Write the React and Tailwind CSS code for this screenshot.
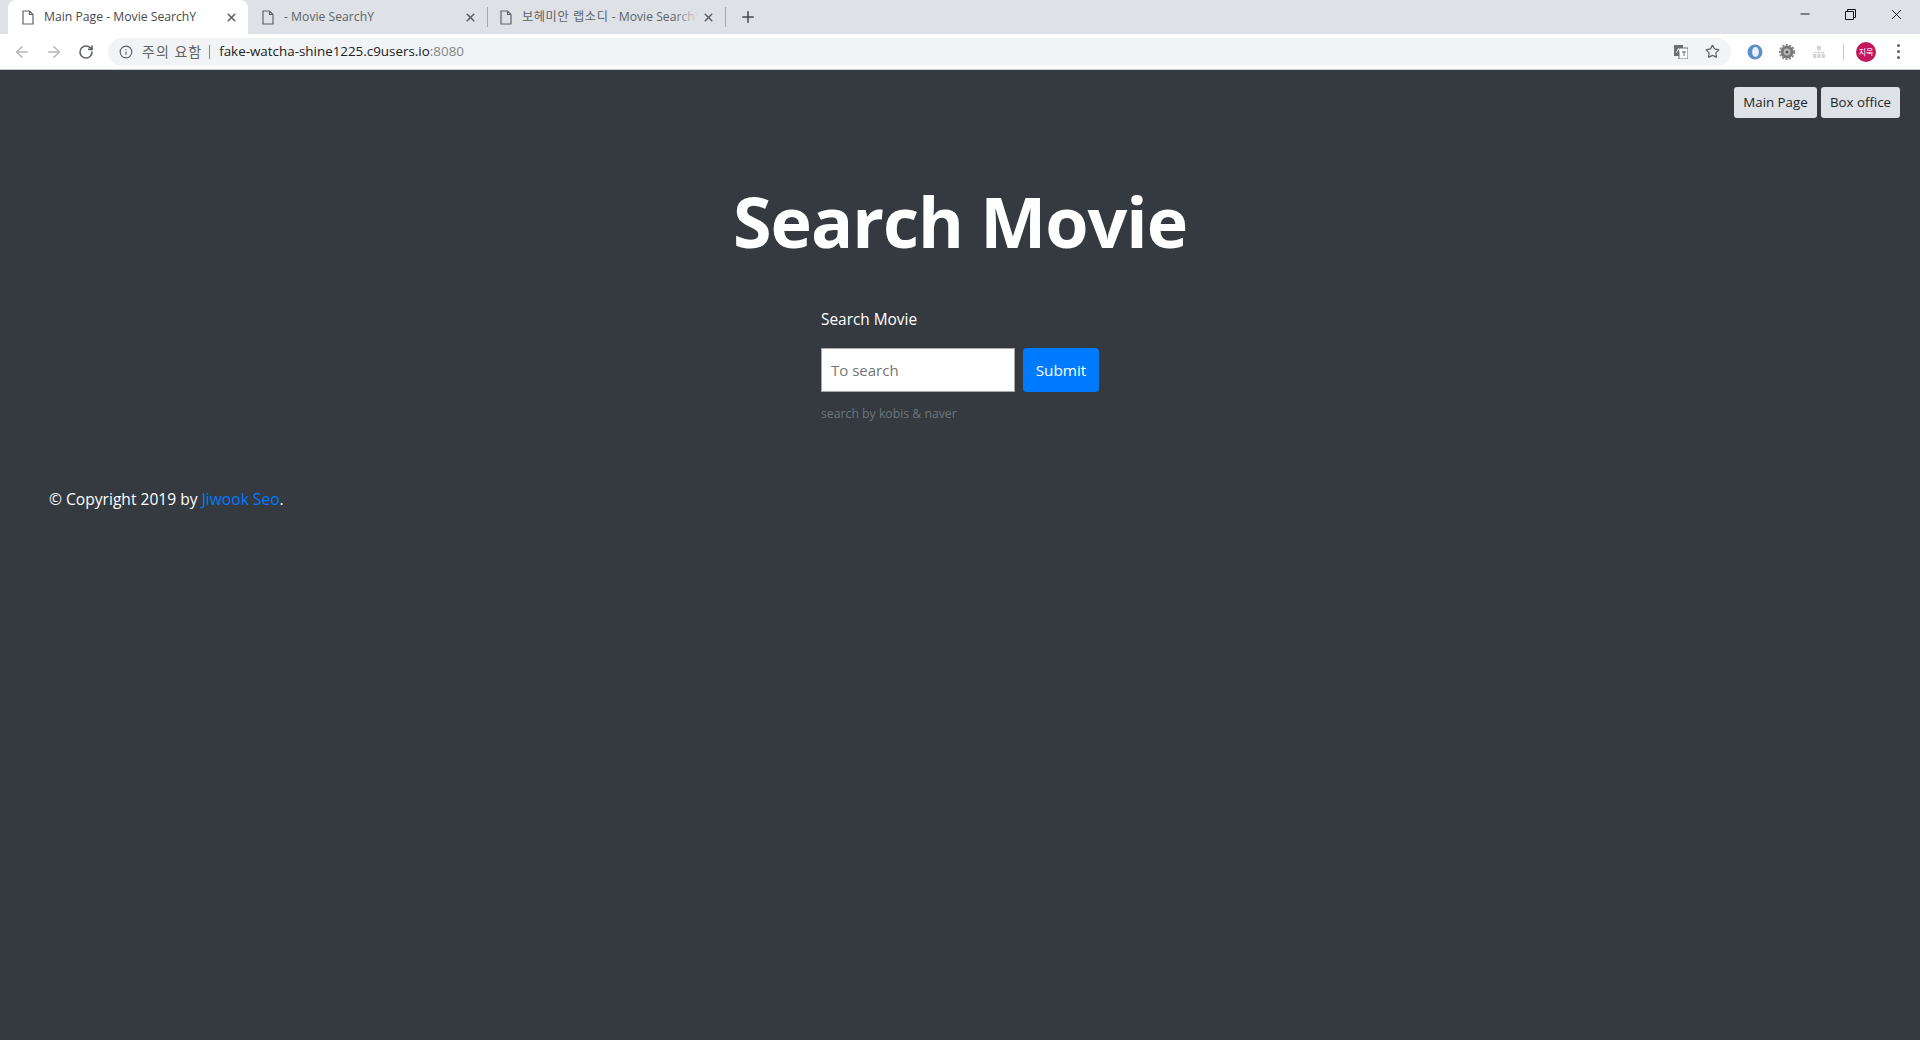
import React from "react";
import { ArrowLeft, ArrowRight, RotateCw, Info, Star, Plus, X, Minus } from "lucide-react";

const uiFont = "font-['Open_Sans','Noto_Sans_CJK_KR',sans-serif]";

const PageIcon = () => (
    <svg width="12" height="15" viewBox="0 0 12 15" fill="none" stroke="#5f6368" strokeWidth="1.2" className="shrink-0">
        <path d="M1 1h6.5L11 4.5V14H1z" />
        <path d="M7.5 1v3.5H11" />
    </svg>
);

const Tab = ({ title, active, width, inset = "pl-[14px]", fade }) => (
    <div
        className={`flex items-center h-[34px] ${inset} pr-[10px] ${width} shrink-0 ${
            active ? "bg-white rounded-t-lg" : ""
        }`}
    >
        <PageIcon />
        <span
            className={`relative ml-[10px] flex-1 overflow-hidden whitespace-nowrap text-[12.2px] ${
                active ? "text-[#45494f]" : "text-[#5f6368]"
            }`}
        >
            {title}
            {fade && (
                <span className="absolute right-0 top-0 bottom-0 w-[24px] bg-gradient-to-r from-transparent to-[#dee1e6]" />
            )}
        </span>
        <X size={13} strokeWidth={3} className="text-[#5f6368] shrink-0 ml-1" />
    </div>
);

const Divider = () => <div className="w-px h-[20px] bg-[#a5a8ad] shrink-0" />;

const TabStrip = () => (
    <div className="flex items-end h-[34px] bg-[#dee1e6] pl-[8px]">
        <Tab title="Main Page - Movie SearchY" active width="w-[240px]" />
        <div className="flex items-center h-[34px]">
            <Tab title="- Movie SearchY" width="w-[239px]" />
            <Divider />
            <Tab
                title={
                    <>
                        <span className="tracking-[0.6px]">보헤미안 랩소디</span> - Movie SearchY
                    </>
                }
                inset="pl-[12px]"
                width="w-[237px]"
                fade
            />
            <Divider />
            <Plus size={18} strokeWidth={2} className="text-[#45494f] ml-[13px]" />
        </div>
        <div className="ml-auto flex items-center h-[28px] self-start text-black">
            <Minus size={14} strokeWidth={1.5} className="mr-[33px]" />
            <svg width="11" height="11" viewBox="0 0 11 11" fill="none" stroke="#111" className="mr-[32px]">
                <path d="M.5 2.5h8v8h-8z" />
                <path d="M2.5 2.5v-2h8v8h-2" />
            </svg>
            <X size={17} strokeWidth={1.2} className="mr-[15px]" />
        </div>
    </div>
);

const ExtensionIcons = () => (
    <div className="flex items-center">
        <svg width="16" height="16" viewBox="0 0 16 16" className="ml-[16px]">
            <circle cx="8" cy="8" r="7.5" fill="#5b8fc9" />
            <ellipse cx="8.5" cy="8" rx="3.4" ry="5" fill="#e8f1fa" />
        </svg>
        <svg width="16" height="16" viewBox="0 0 16 16" className="ml-[16px]">
            <circle cx="8" cy="8" r="6.4" fill="#777" />
            <circle cx="8" cy="8" r="7.2" fill="none" stroke="#777" strokeWidth="1.6" strokeDasharray="2 1.6" />
            <circle cx="8" cy="8" r="3.4" fill="#bbb" />
            <circle cx="8" cy="8" r="1.6" fill="#555" />
        </svg>
        <svg width="14" height="14" viewBox="0 0 14 14" fill="#d4d4d4" className="ml-[17px]">
            <rect x="5" y="1" width="4" height="4" />
            <rect x="1" y="9" width="3.4" height="4" />
            <rect x="5.3" y="9" width="3.4" height="4" />
            <rect x="9.6" y="9" width="3.4" height="4" />
            <path d="M6.6 5h.8v2H12v2h-.8V8H7.4v1h-.8V8H2.8v1H2V7h4.6z" />
        </svg>
        <div className="w-px h-[16px] bg-[#c8cacd] ml-[17px]" />
        <div className="ml-[12px] w-[20px] h-[20px] rounded-full bg-[#c2185b] text-white text-[8px] flex items-center justify-center">
            지욱
        </div>
        <div className="ml-[21px] mr-[20px] flex flex-col gap-[3px]">
            <span className="w-[3px] h-[3px] rounded-full bg-[#5f6368]" />
            <span className="w-[3px] h-[3px] rounded-full bg-[#5f6368]" />
            <span className="w-[3px] h-[3px] rounded-full bg-[#5f6368]" />
        </div>
    </div>
);

const Toolbar = () => (
    <div className="flex items-center h-[36px] bg-white border-b border-[#c9ccd0]">
        <ArrowLeft size={18} strokeWidth={2} className="text-[#b4b6b9] ml-[13px]" />
        <ArrowRight size={18} strokeWidth={2} className="text-[#b4b6b9] ml-[14px]" />
        <RotateCw size={16} strokeWidth={2.4} className="text-[#5f6368] ml-[15px]" />
        <div className="flex items-center flex-1 h-[28px] ml-[14px] rounded-full bg-[#f1f3f4] pl-[11px] pr-[10px]">
            <Info size={14} strokeWidth={2} className="text-[#5f6368]" />
            <span className="ml-[9px] text-[14px] tracking-[1px] text-[#5f6368]">주의 요함</span>
            <span className="w-px h-[14px] bg-[#80868b] ml-[7px]" />
            <span className="ml-[9px] text-[13.4px] text-[#202124]">
                fake-watcha-shine1225.c9users.io<span className="text-[#80868b]">:8080</span>
            </span>
            <svg width="14" height="14" viewBox="0 0 14 14" className="ml-auto mr-[17px]">
                <rect x="0" y="0" width="9" height="11" fill="#6b6f73" />
                <rect x="5" y="3" width="9" height="11" fill="#fff" stroke="#6b6f73" />
                <path d="M2.5 7.5l2-4 2 4" fill="none" stroke="#fff" />
                <path d="M8 7h4M10 6v5" fill="none" stroke="#6b6f73" />
            </svg>
            <Star size={15} strokeWidth={2} className="text-[#5f6368] mr-[1px]" />
        </div>
        <ExtensionIcons />
    </div>
);

const NavButton = ({ children, width }) => (
    <button className={`h-[31px] ${width} rounded-[3px] bg-[#dee2e6] text-[13.3px] text-[#212529]`}>{children}</button>
);

const App = () => {
    return (
        <div className={`${uiFont} w-full h-[1040px] flex flex-col bg-[#343a40] overflow-hidden`}>
            <TabStrip />
            <Toolbar />
            <main className="flex-1 flex flex-col">
                <nav className="flex justify-end gap-[4px] pt-[17px] pr-[20px]">
                    <NavButton width="w-[83px]">Main Page</NavButton>
                    <NavButton width="w-[79px]">Box office</NavButton>
                </nav>
                <h1 className="mt-[60px] text-center text-[70px] leading-[86px] tracking-[-1px] font-bold text-white">
                    Search Movie
                </h1>
                <form className="mx-auto w-[278px] mt-[44px]">
                    <label className="block text-[15.4px] leading-[24px] text-white">Search Movie</label>
                    <div className="flex gap-[8px] mt-[16px]">
                        <input
                            placeholder="To search"
                            className="w-[194px] h-[44px] px-[9px] bg-white border border-[#a8a8a8] text-[15px] placeholder:text-[#757575]"
                        />
                        <button type="button" className="w-[76px] h-[44px] rounded-[4px] bg-[#007bff] text-[15.3px] text-white">
                            Submit
                        </button>
                    </div>
                    <p className="mt-[12px] text-[12.25px] leading-[20px] text-[#6c757d]">search by kobis &amp; naver</p>
                </form>
                <p className="mt-[63px] pl-[49px] text-[15.6px] leading-[24px] text-white">
                    © Copyright 2019 by <a className="text-[#007bff]">Jiwook Seo</a>.
                </p>
            </main>
        </div>
    );
};

export default App;
